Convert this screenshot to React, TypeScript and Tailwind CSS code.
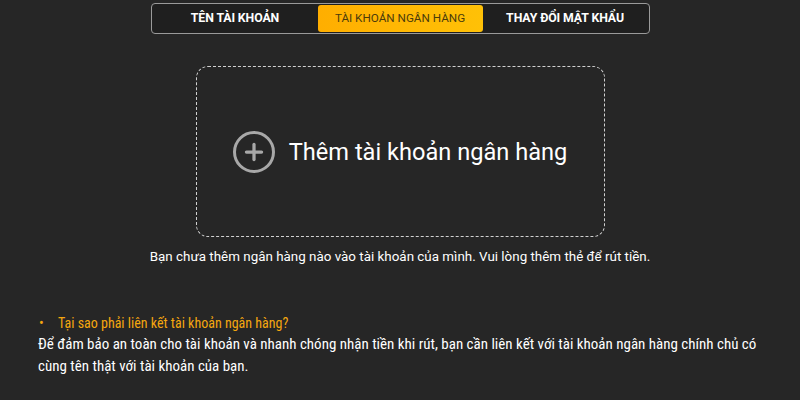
import { Plus } from 'lucide-react'

const tabs = [
  { label: 'TÊN TÀI KHOẢN', active: false },
  { label: 'TÀI KHOẢN NGÂN HÀNG', active: true },
  { label: 'THAY ĐỔI MẬT KHẨU', active: false },
]

export default function App() {
  return (
    <div className="min-h-screen bg-[#262626] font-['Roboto',sans-serif] text-white">
      {/* Tabs */}
      <div className="flex justify-center pt-[3px]">
        <div className="flex h-[31px] w-[499px] rounded-[4px] border border-[#9a9a9a] bg-[#1f1f1f] p-[1px]">
          {tabs.map((tab) => (
            <button
              key={tab.label}
              className={
                tab.active
                  ? 'flex flex-1 items-center justify-center rounded-[3px] bg-gradient-to-r from-[#ffae00] to-[#ffc107] text-[11.7px] text-[#4b3b0c]'
                  : 'flex flex-1 items-center justify-center text-[12.3px] font-bold tracking-[-0.1px] text-white'
              }
            >
              {tab.label}
            </button>
          ))}
        </div>
      </div>

      {/* Add bank */}
      <div className="flex justify-center pt-[32px]">
        <button className="flex h-[171px] w-[409px] items-center justify-center gap-[14px] rounded-[12px] border border-dashed border-[#d0d0d0]">
          <span className="flex h-[42px] w-[42px] items-center justify-center rounded-full border-[3px] border-[#a8a8a8]">
            <Plus className="h-[26px] w-[26px] text-[#a8a8a8]" strokeWidth={3} />
          </span>
          <span className="pt-[2px] text-[23.6px] text-white">Thêm tài khoản ngân hàng</span>
        </button>
      </div>
      <p className="mt-[11px] text-center text-[13.4px] leading-[18px]">
        Bạn chưa thêm ngân hàng nào vào tài khoản của mình. Vui lòng thêm thẻ để rút tiền.
      </p>

      {/* Info */}
      <div className="mt-[47px] px-[38px] font-['Liberation_Sans_Narrow','Roboto_Condensed','Liberation_Sans',sans-serif]">
        <div className="flex text-[14px] leading-[20px] text-[#f5a70f]">
          <span className="w-[20px] pl-[1px]">•</span>
          <span>Tại sao phải liên kết tài khoản ngân hàng?</span>
        </div>
        <p className="text-[15px] leading-[22px] text-white">
          Để đảm bảo an toàn cho tài khoản và nhanh chóng nhận tiền khi rút, bạn cần liên kết với tài khoản ngân hàng chính chủ có
          cùng tên thật với tài khoản của bạn.
        </p>
        <div className="mt-[24px] flex text-[14px] leading-[20px] text-[#f5a70f]">
          <span className="w-[20px] pl-[1px]">•</span>
          <span>Làm thế nào để liên kết tài khoản ngân hàng?</span>
        </div>
      </div>
    </div>
  )
}
